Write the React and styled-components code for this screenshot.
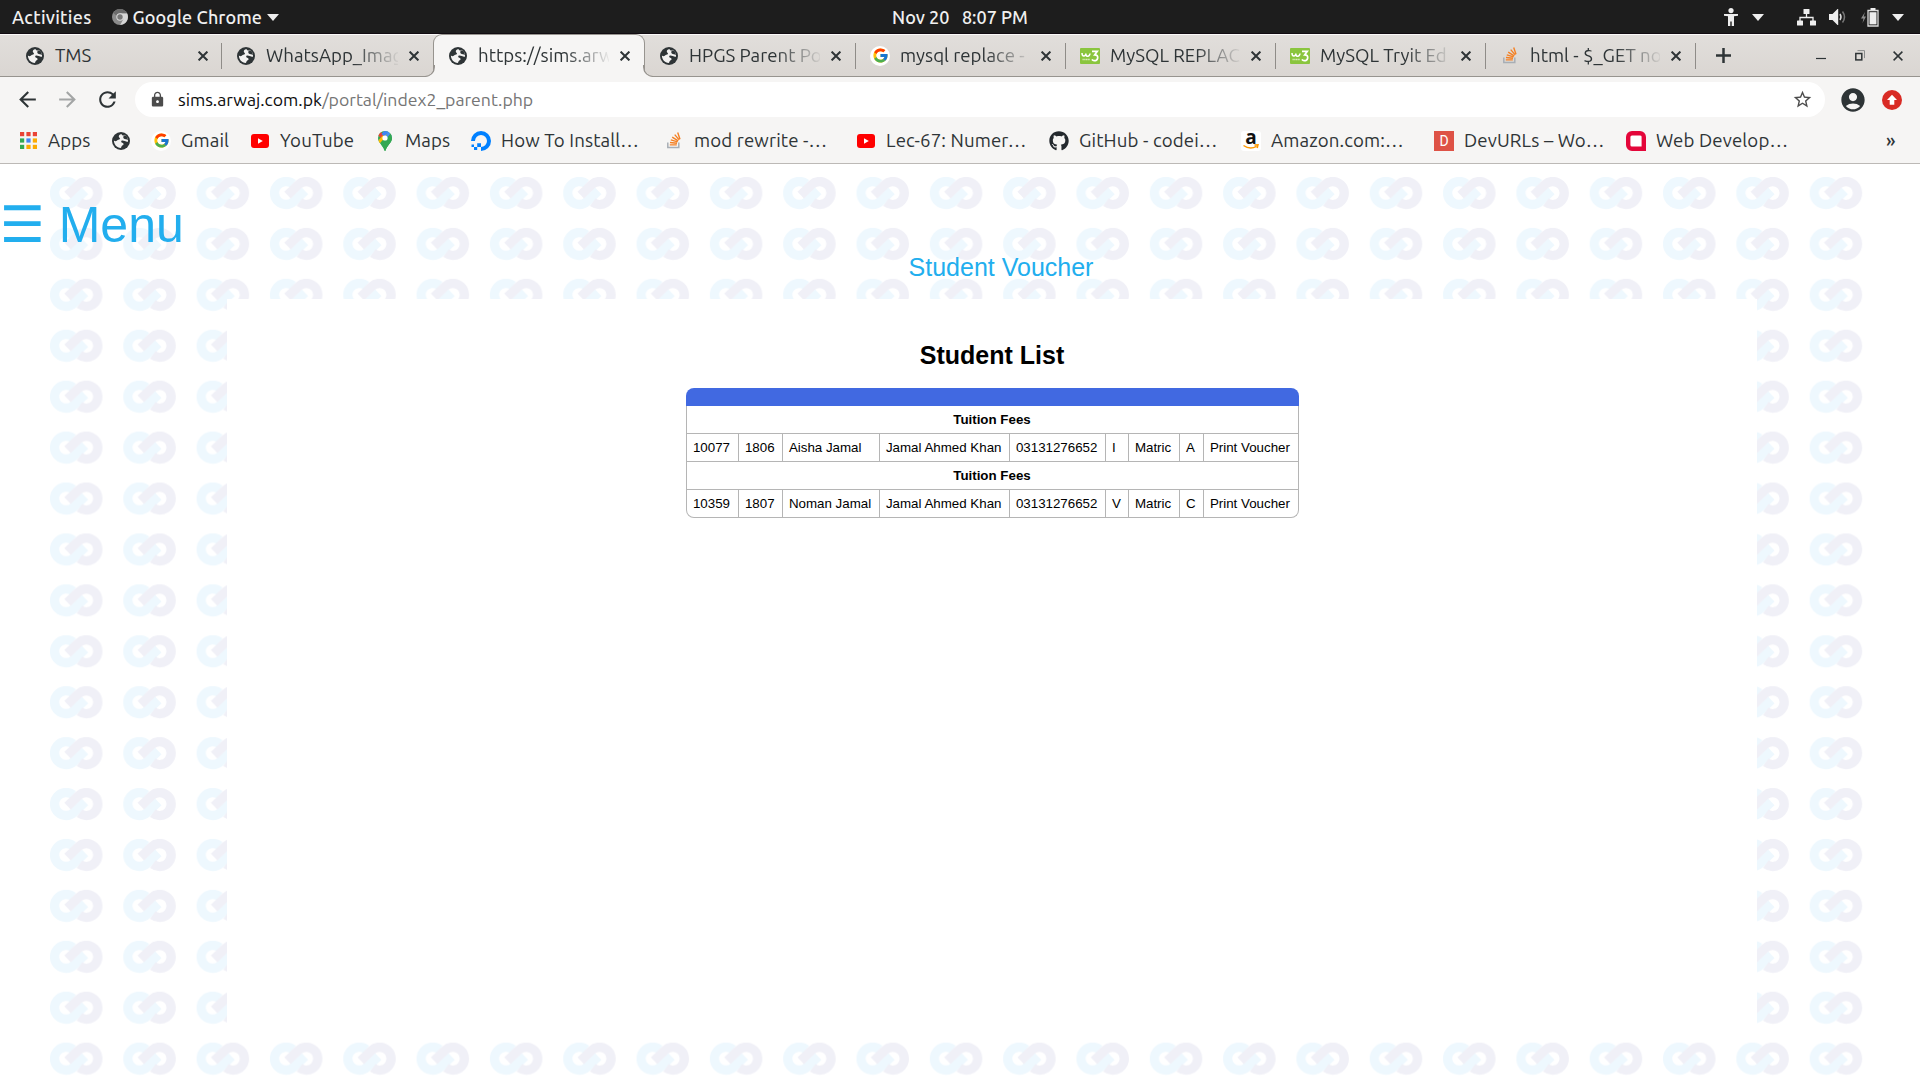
import React from "react";
import styled, { createGlobalStyle, css } from "styled-components";
import {
  MdArrowBack,
  MdArrowForward,
  MdRefresh,
  MdLock,
  MdStarBorder,
  MdAccountCircle,
} from "react-icons/md";
import { FcGoogle } from "react-icons/fc";
import { FaGithub } from "react-icons/fa";

const ui = `"Ubuntu", "Noto Sans", "Open Sans", sans-serif`;
const ink = "#2e3436";

const GlobalStyle = createGlobalStyle`
  * { box-sizing: border-box; }
  html, body { margin: 0; padding: 0; background: #fff; }
  body { width: 1920px; height: 1080px; overflow: hidden; }
  svg { display: block; flex: none; }
`;

const Screen = styled.div`
  display: flex;
  flex-direction: column;
  width: 1920px;
  height: 1080px;
  overflow: hidden;
  font-family: ${ui};
`;

/* ---------- desktop bar ---------- */

const DesktopBar = styled.header`
  display: grid;
  grid-template-columns: 1fr auto 1fr;
  align-items: center;
  height: 34px;
  flex: none;
  background: #1d1d1d;
  border-bottom: 1px solid #120c12;
  color: #f0f0f0;
  font-size: 18px;
  font-weight: 500;
  line-height: 33px;
  white-space: pre;
`;

const BarGroup = styled.div`
  display: flex;
  align-items: center;
  padding: ${(p) => p.$pad || 0};
  justify-content: ${(p) => (p.$end ? "flex-end" : "flex-start")};
`;

const BarText = styled.span`
  padding-top: 1px;
  margin-right: ${(p) => p.$after || 0}px;
  letter-spacing: ${(p) => p.$track || 0}px;
`;

const BarIcon = styled.span`
  display: flex;
  margin-right: ${(p) => p.$after || 0}px;
`;

/* ---------- tabs ---------- */

const TabStrip = styled.nav`
  display: flex;
  height: 43px;
  flex: none;
  padding-left: 11px;
  background: linear-gradient(#e1dedb, #dad6d2);
  border-top: 1px solid #faf9f8;
  border-bottom: 1px solid #97948f;
`;

const Tab = styled.div`
  position: relative;
  display: flex;
  align-items: center;
  flex: none;
  width: ${(p) => p.$width}px;
  height: 41px;
  padding-left: ${(p) => p.$pad}px;
  ${(p) =>
    p.$line &&
    css`
      background: linear-gradient(#8f8c88, #8f8c88) right 0 top 8px / 1px 26px no-repeat;
    `}
  ${(p) =>
    p.$active &&
    css`
      height: 43px;
      margin-top: -1px;
      padding-bottom: 1px;
      background: #f6f5f4;
      border: 1px solid #97948f;
      border-bottom: 0;
      border-radius: 9px 9px 0 0;
      &::before,
      &::after {
        content: "";
        position: absolute;
        bottom: 0;
        width: 11px;
        height: 11px;
        border-bottom: 1px solid #97948f;
      }
      &::before {
        left: -11px;
        border-right: 1px solid #97948f;
        border-bottom-right-radius: 10px;
        box-shadow: 3px 3px 0 #f6f5f4;
      }
      &::after {
        right: -11px;
        border-left: 1px solid #97948f;
        border-bottom-left-radius: 10px;
        box-shadow: -3px 3px 0 #f6f5f4;
      }
    `}
`;

const IconSlot = styled.span`
  display: flex;
  align-items: center;
  justify-content: center;
  width: 20px;
  height: 20px;
  flex: none;
  color: ${ink};
`;

const TabTitle = styled.span`
  width: ${(p) => p.$room}px;
  margin-left: 10px;
  white-space: nowrap;
  color: ${ink};
  font-size: 18.67px;
  line-height: 26px;
  ${(p) =>
    p.$fade &&
    css`
      mask-image: linear-gradient(90deg, #000 66%, transparent 102%);
    `}
`;

const TabClose = styled.span`
  display: flex;
  margin-left: 11px;
`;

const WindowControls = styled.div`
  display: flex;
  align-items: center;
  flex: 1;
  padding-left: 20px;
`;

const ControlGap = styled.span`
  width: ${(p) => p.$w}px;
`;

/* ---------- toolbar ---------- */

const Toolbar = styled.div`
  display: flex;
  align-items: center;
  height: 45px;
  flex: none;
  padding-left: 15px;
  background: #f6f5f4;
  color: ${ink};
`;

const NavButton = styled.span`
  display: flex;
  width: 40px;
  color: ${(p) => (p.$off ? "#a3a5a5" : ink)};
`;

const AddressBar = styled.div`
  display: flex;
  align-items: center;
  width: 1690px;
  height: 35px;
  padding: 0 12px 0 14px;
  border-radius: 18px;
  background: #fff;
  color: #4c4c4c;
`;

const Address = styled.span`
  flex: 1;
  margin-left: 12px;
  color: #757575;
  font-size: 17.67px;
  line-height: 30px;
`;

const Host = styled.span`
  color: #0c0c0c;
`;

const ProfileIcons = styled.div`
  display: flex;
  align-items: center;
  gap: 15px;
  margin-left: 14px;
`;

/* ---------- bookmarks ---------- */

const BookmarkBar = styled.div`
  display: flex;
  align-items: center;
  height: 42px;
  flex: none;
  padding-left: 18px;
  padding-bottom: 4px;
  background: #f6f5f4;
  border-bottom: 1px solid #bcb9b6;
`;

const Bookmark = styled.span`
  display: flex;
  align-items: center;
  flex: none;
  width: ${(p) => p.$width}px;
`;

const BookmarkText = styled.span`
  margin-left: ${(p) => p.$gap}px;
  white-space: nowrap;
  color: ${ink};
  font-size: 18.67px;
  font-weight: ${(p) => (p.$strong ? 500 : 400)};
  line-height: 28px;
  letter-spacing: 0.13px;
`;

const LetterBadge = styled.span`
  width: 20px;
  height: 20px;
  background: #de5246;
  color: #fff;
  font: 14px/20px Roboto, sans-serif;
  text-align: center;
`;

const AmazonBadge = styled.span`
  display: flex;
  flex-direction: column;
  align-items: center;
  width: 20px;
  height: 20px;
  border-radius: 3px;
  background: #fff;
  color: #111;
  font: 700 19px/13px "Open Sans", sans-serif;
`;

const RoundBadge = styled.span`
  display: flex;
  align-items: center;
  justify-content: center;
  width: 20px;
  height: 20px;
  border-radius: 50%;
  background: #fff;
`;

/* ---------- page ---------- */

const Page = styled.main`
  position: relative;
  flex: 1;
  overflow: hidden;
  background: #fff;
  font-family: "Liberation Sans", Arial, sans-serif;
`;

const Backdrop = styled.div`
  position: absolute;
  left: 50px;
  top: 13px;
`;

const PageBody = styled.div`
  position: relative;
  display: flex;
  flex-direction: column;
`;

const MenuButton = styled.div`
  height: 52px;
  margin-top: 35px;
  color: #22aeee;
  font-size: 50px;
  line-height: 52px;
  font-family: "Liberation Sans", "DejaVu Sans", sans-serif;
`;

const PageTitle = styled.div`
  height: 48px;
  padding-left: 82px;
  color: #22aeee;
  font-size: 25px;
  line-height: 32px;
  text-align: center;
`;

const Panel = styled.section`
  display: flex;
  flex-direction: column;
  align-items: center;
  width: 1530px;
  height: 727px;
  margin-left: 227px;
  padding-top: 42px;
  background: #fff;
`;

const ListTitle = styled.h2`
  margin: 0 0 18px;
  color: #000;
  font-size: 25px;
  line-height: 29px;
`;

const Table = styled.div`
  width: 613px;
  font-size: 13.33px;
  color: #000;
`;

const TableHead = styled.div`
  height: 18px;
  border-radius: 8px 8px 0 0;
  background: #4169e1;
`;

const TableBody = styled.div`
  border: 1px solid #b5b5b5;
  border-top: 0;
  border-radius: 0 0 8px 8px;
`;

const GroupRow = styled.div`
  height: 28px;
  line-height: 27px;
  font-weight: 700;
  text-align: center;
  border-bottom: 1px solid #b5b5b5;
`;

const Row = styled.div`
  display: grid;
  grid-template-columns: 52px 44px 97px 130px 96px 23px 51px 24px 94px;
  height: 28px;
  line-height: 27px;
  border-bottom: 1px solid #b5b5b5;
  &:last-child {
    height: 27px;
    border-bottom: 0;
  }
`;

const Cell = styled.span`
  padding-left: 6.4px;
  white-space: nowrap;
  border-right: 1px solid #b5b5b5;
  &:last-child {
    border-right: 0;
  }
`;

/* ---------- icons ---------- */

const Caret = () => (
  <svg width="12" height="7" viewBox="0 0 12 7"><path d="M0 0h12L6 7z" fill="#eee" /></svg>
);

const ChromeGray = () => (
  <svg width="16" height="16" viewBox="0 0 16 16">
    <circle cx="8" cy="8" r="8" fill="#8b8b8b" />
    <path d="M8 4.200h7A8 8 0 0 1 8.200 16l3.200-6z" fill="#d6d6d6" />
    <path d="M1.200 3.800A8 8 0 0 1 15 4.200H8a3.800 3.800 0 0 0-3.600 2.600z" fill="#6b6b6b" />
    <circle cx="8" cy="8" r="3.700" fill="#d9d9d9" />
    <circle cx="8" cy="8" r="2.700" fill="#777" />
  </svg>
);

const Person = () => (
  <svg width="16" height="18" viewBox="0 0 16 18" fill="#eee">
    <circle cx="8" cy="2.600" r="2.600" />
    <path d="M1 6h14v1.700l-4 .5V18H8.700v-4.500H7.300V18H5V8.200L1 7.700z" />
  </svg>
);

const Network = () => (
  <svg width="19" height="17" viewBox="0 0 19 17" fill="#eee">
    <rect x="6.500" y="0" width="6" height="5" rx=".6" />
    <rect x="0" y="11.500" width="6" height="5" rx=".6" />
    <rect x="13" y="11.500" width="6" height="5" rx=".6" />
    <path d="M9.500 5v3.500M3 12V8.500h13V12" fill="none" stroke="#eee" strokeWidth="1.300" />
  </svg>
);

const Volume = () => (
  <svg width="18" height="16" viewBox="0 0 18 16">
    <path d="M0 5h3.500L8.500 0h.7v16h-.7l-5-5H0z" fill="#eee" />
    <path d="M11 5q2 3 0 6" stroke="#ddd" strokeWidth="1.500" fill="none" />
    <path d="M13.500 2.500q4 5.500 0 11" stroke="#777" strokeWidth="1.500" fill="none" />
  </svg>
);

const Battery = () => (
  <svg width="18" height="19" viewBox="0 0 18 19">
    <path d="M4 4L0 10.500h2.500L1.500 15 5 8.500H2.700z" fill="#8e8e8e" />
    <path d="M7 2.500h10v15.500H7z" fill="none" stroke="#ddd" strokeWidth="1.300" />
    <rect x="9.500" y="0" width="5" height="2" fill="#eee" />
    <rect x="8.500" y="4.200" width="7" height="12.200" fill="#eee" />
  </svg>
);

const Cross = ({ size = 10, weight = 2 }) => (
  <svg width={size} height={size} viewBox="0 0 10 10">
    <path d="M.6.600l8.800 8.800M9.400.600L.6 9.400" stroke={ink} strokeWidth={weight} />
  </svg>
);

const Plus = () => (
  <svg width="15" height="15" viewBox="0 0 15 15">
    <path d="M7.500 0v15M0 7.500h15" stroke={ink} strokeWidth="2.500" />
  </svg>
);

const Minimise = () => (
  <svg width="10" height="10" viewBox="0 0 10 10"><path d="M0 7.500h10" stroke={ink} strokeWidth="1.200" /></svg>
);

const Restore = () => (
  <svg width="10" height="11" viewBox="0 0 10 11" fill="none">
    <path d="M2.500.600h7v7.500" stroke="#8b8d8d" strokeWidth="1" />
    <rect x=".8" y="3.500" width="6" height="6.400" stroke={ink} strokeWidth="1.500" />
  </svg>
);

const Globe = () => (
  <svg width="18" height="18" viewBox="0 0 18 18">
    <circle cx="9" cy="9" r="9" fill={ink} />
    <path
      d="M9.300 2c-1.700.5-2.600 1.500-2.500 2.700.1 1 1.300 1 1.200 2C7.900 7.700 6.500 7.400 5.600 8 4.800 8.500 4.600 9.200 3.600 9.200c-.7 0-1.300-.4-1.700-.7C1.900 12.500 4.800 15.800 8.700 16.100c.9-.4.500-1.300 1.100-2 .7-.8 1.800-.9 1.800-2 0-1.200-1.300-1.200-2-1.700C9 9.900 9 9 9.800 8.600c1-.5 1.900.2 2.900.3 1.200.1 2 .9 3.300.8C16.400 7 15 4 12.500 2.700c-.4 1-1.500 1-2.100.6C10 3 9.800 2.400 9.300 2z"
      fill="#f3f2f1"
    />
    <path d="M12.600 3.200c-1.500.9-1.700 2.200-.8 3.200.9 1 3 .6 4.300 1.600L14.500 4z" fill={ink} />
  </svg>
);

const Google = () => <RoundBadge><FcGoogle size={17} /></RoundBadge>;

const W3 = () => (
  <svg width="20" height="16" viewBox="0 0 20 16">
    <rect width="20" height="16" rx="1" fill="#8ac53e" />
    <path d="M2 5c0 4 3.500 4 3.800.500C6 9.500 9.500 9 10 5.500" fill="none" stroke="#fff" strokeWidth="1.500" />
    <path d="M12 3.300h5.300L14.700 6.800q3.300 0 3 3.200-.6 3.300-4.200 2.500-1-.3-1.500-1.200" fill="none" stroke="#fff" strokeWidth="1.700" />
    <path d="M2.500 11.500h7.500" stroke="#d5edb5" strokeWidth="1.400" strokeDasharray="1.300 .4" />
  </svg>
);

const StackOverflow = () => (
  <svg width="15" height="17" viewBox="0 0 15 17" fill="none">
    <path d="M.8 10.500v5h11v-5" stroke="#a8aeb5" strokeWidth="1.500" />
    <path d="M2.800 12.900h7M3 10.500l7 .7M3.800 7.800l6.800 2M5.200 5.200l6 3.600M7.700 2.600l4.500 5.300M10.700.6l2.300 6.600" stroke="#f48024" strokeWidth="1.400" />
  </svg>
);

const AppsGrid = () => (
  <svg width="17" height="17" viewBox="0 0 17 17">
    {["#ea4335", "#ea4335", "#ea4335", "#34a853", "#4285f4", "#fbab04", "#34a853", "#fbab04", "#fbab04"].map((c, i) => (
      <rect key={i} x={(i % 3) * 6.400} y={Math.floor(i / 3) * 6.400} width="4.200" height="4.200" fill={c} />
    ))}
  </svg>
);

const YouTube = () => (
  <svg width="18" height="14" viewBox="0 0 18 14">
    <rect width="18" height="14" rx="3" fill="#f00" />
    <path d="M7 4.200v5.600L11.800 7z" fill="#fff" />
  </svg>
);

const MapsPin = () => (
  <svg width="14" height="20" viewBox="0 0 14 20">
    <defs>
      <clipPath id="pin"><path d="M7 0a7 7 0 0 1 7 7c0 5-5 7-6.300 12.500-.2.700-1.200.700-1.400 0C5 14 0 12 0 7a7 7 0 0 1 7-7z" /></clipPath>
    </defs>
    <g clipPath="url(#pin)">
      <rect width="14" height="20" fill="#34a853" />
      <path d="M0 0v4.500L4.500 8 7.500 4.500 1.500 0z" fill="#ea4335" />
      <path d="M0 14.500L9.500 3.500 6 3-1 11z" fill="#fbbc04" />
      <path d="M6 0h5L6.500 5.500 3.500 3z" fill="#4285f4" />
      <path d="M10 0l4 5-5 6-2-4z" fill="#4a90f5" />
      <path d="M12.500 2.500L3 14l5 6 8-10V3z" fill="#34a853" />
    </g>
    <circle cx="7" cy="7" r="2.600" fill="#fff" />
  </svg>
);

const DigitalOcean = () => (
  <svg width="20" height="20" viewBox="0 0 20 20">
    <path d="M2 10a8 8 0 1 1 8 8" fill="none" stroke="#0080ff" strokeWidth="4" />
    <path d="M6.200 12.200H10V16H6.200zM3 16h3.200v3H3zM.5 13.500H3V16H.5z" fill="#0080ff" />
  </svg>
);

const Smile = () => (
  <svg width="16" height="6" viewBox="0 0 16 6" fill="none">
    <path d="M.5 1.500q6.500 4.500 13 .8M11.500 1l3.500-.2-.8 3.200" stroke="#ff9900" strokeWidth="1.500" />
  </svg>
);

const RedFrame = () => (
  <svg width="20" height="20" viewBox="0 0 20 20">
    <path d="M6 2.200h8a3.800 3.800 0 0 1 3.800 3.800v11.800H6A3.800 3.800 0 0 1 2.200 14V6A3.800 3.800 0 0 1 6 2.200z" fill="#fff" stroke="#e4063a" strokeWidth="4.400" />
  </svg>
);

const UpdateBadge = () => (
  <svg width="20" height="20" viewBox="0 0 20 20">
    <circle cx="10" cy="10" r="10" fill="#d92b25" />
    <path d="M10 4.700l5 5.300h-2.700v4.800H7.700V10H5z" fill="#fff" />
  </svg>
);

const ChainPattern = () => (
  <svg width="1833" height="903" viewBox="0 0 1833 903">
    <defs>
      <pattern id="chain" width="73.320" height="50.920" patternUnits="userSpaceOnUse">
        <g fill="none" strokeWidth="9.300">
          <path d="M23 6.800A11.500 11.500 0 1 0 24 24.300L35 13.800" stroke="#eef8fe" />
          <path d="M29.500 25.300A11.500 11.500 0 1 0 28.500 7.600L17.500 18.100" stroke="#f0f0f7" />
        </g>
      </pattern>
    </defs>
    <rect width="1833" height="903" fill="url(#chain)" />
  </svg>
);

/* ---------- data ---------- */

const tabs = [
  { title: "TMS", icon: <Globe />, width: 211, pad: 14, room: 132, line: true },
  { title: "WhatsApp_Imag", icon: <Globe />, width: 211, pad: 14, room: 132, fade: true },
  { title: "https://sims.arw", icon: <Globe />, width: 212, pad: 14, room: 131, fade: true, active: true },
  { title: "HPGS Parent Po", icon: <Globe />, width: 211, pad: 14, room: 131, fade: true, line: true },
  { title: "mysql replace -", icon: <Google />, width: 210, pad: 14, room: 130, fade: true, line: true },
  { title: "MySQL REPLAC", icon: <W3 />, width: 210, pad: 14, room: 130, fade: true, line: true },
  { title: "MySQL Tryit Ed", icon: <W3 />, width: 210, pad: 14, room: 130, fade: true, line: true },
  { title: "html - $_GET no", icon: <StackOverflow />, width: 210, pad: 14, room: 130, fade: true, line: true },
];

const bookmarks = [
  { text: "Apps", icon: <AppsGrid />, width: 93, gap: 10 },
  { icon: <Globe />, width: 40 },
  { text: "Gmail", icon: <Google />, width: 99, gap: 10 },
  { text: "YouTube", icon: <YouTube />, width: 125, gap: 10 },
  { text: "Maps", icon: <MapsPin />, width: 96, gap: 10 },
  { text: "How To Install…", icon: <DigitalOcean />, width: 193, gap: 10 },
  { text: "mod rewrite -…", icon: <StackOverflow />, width: 192, gap: 10 },
  { text: "Lec-67: Numer…", icon: <YouTube />, width: 193, gap: 10 },
  { text: "GitHub - codei…", icon: <FaGithub size={20} color="#24292e" />, width: 192, gap: 10 },
  { text: "Amazon.com:…", icon: <AmazonBadge>a<Smile /></AmazonBadge>, width: 193, gap: 10 },
  { text: "DevURLs – Wo…", icon: <LetterBadge>D</LetterBadge>, width: 192, gap: 10 },
  { text: "Web Develop…", icon: <RedFrame />, width: 260, gap: 10 },
];

const students = [
  ["10077", "1806", "Aisha Jamal", "Jamal Ahmed Khan", "03131276652", "I", "Matric", "A", "Print Voucher"],
  ["10359", "1807", "Noman Jamal", "Jamal Ahmed Khan", "03131276652", "V", "Matric", "C", "Print Voucher"],
];

export default function App() {
  return (
    <Screen>
      <GlobalStyle />
      <DesktopBar>
        <BarGroup $pad="0 0 0 12px">
          <BarText $after={20} $track={0.3}>Activities</BarText>
          <BarIcon $after={5}><ChromeGray /></BarIcon>
          <BarText $after={5} $track={0.1}>Google Chrome</BarText>
          <Caret />
        </BarGroup>
        <BarText>{"Nov 20   8:07 PM"}</BarText>
        <BarGroup $end $pad="0 16px 0 0">
          <BarIcon $after={13}><Person /></BarIcon>
          <BarIcon $after={33}><Caret /></BarIcon>
          <BarIcon $after={13}><Network /></BarIcon>
          <BarIcon $after={14}><Volume /></BarIcon>
          <BarIcon $after={13}><Battery /></BarIcon>
          <Caret />
        </BarGroup>
      </DesktopBar>

      <TabStrip>
        {tabs.map((t) => (
          <Tab key={t.title} $width={t.width} $pad={t.pad} $line={t.line} $active={t.active}>
            <IconSlot>{t.icon}</IconSlot>
            <TabTitle $fade={t.fade} $room={t.room}>{t.title}</TabTitle>
            <TabClose><Cross /></TabClose>
          </Tab>
        ))}
        <WindowControls>
          <Plus />
          <ControlGap $w={85} />
          <Minimise />
          <ControlGap $w={29} />
          <Restore />
          <ControlGap $w={28} />
          <Cross weight={1.5} />
        </WindowControls>
      </TabStrip>

      <Toolbar>
        <NavButton><MdArrowBack size={25} /></NavButton>
        <NavButton $off><MdArrowForward size={25} /></NavButton>
        <NavButton><MdRefresh size={25} /></NavButton>
        <AddressBar>
          <MdLock size={17} />
          <Address><Host>sims.arwaj.com.pk</Host>/portal/index2_parent.php</Address>
          <MdStarBorder size={21} />
        </AddressBar>
        <ProfileIcons>
          <MdAccountCircle size={28} />
          <UpdateBadge />
        </ProfileIcons>
      </Toolbar>

      <BookmarkBar>
        {bookmarks.map((b, i) => (
          <Bookmark key={i} $width={b.width}>
            <IconSlot>{b.icon}</IconSlot>
            {b.text && <BookmarkText $gap={b.gap}>{b.text}</BookmarkText>}
          </Bookmark>
        ))}
        <BookmarkText $gap={0} $strong>»</BookmarkText>
      </BookmarkBar>

      <Page>
        <Backdrop><ChainPattern /></Backdrop>
        <PageBody>
          <MenuButton>☰ Menu</MenuButton>
          <PageTitle>Student Voucher</PageTitle>
          <Panel>
            <ListTitle>Student List</ListTitle>
            <Table>
              <TableHead />
              <TableBody>
                {students.map((s) => (
                  <React.Fragment key={s[0]}>
                    <GroupRow>Tuition Fees</GroupRow>
                    <Row>{s.map((c, j) => <Cell key={j}>{c}</Cell>)}</Row>
                  </React.Fragment>
                ))}
              </TableBody>
            </Table>
          </Panel>
        </PageBody>
      </Page>
    </Screen>
  );
}
